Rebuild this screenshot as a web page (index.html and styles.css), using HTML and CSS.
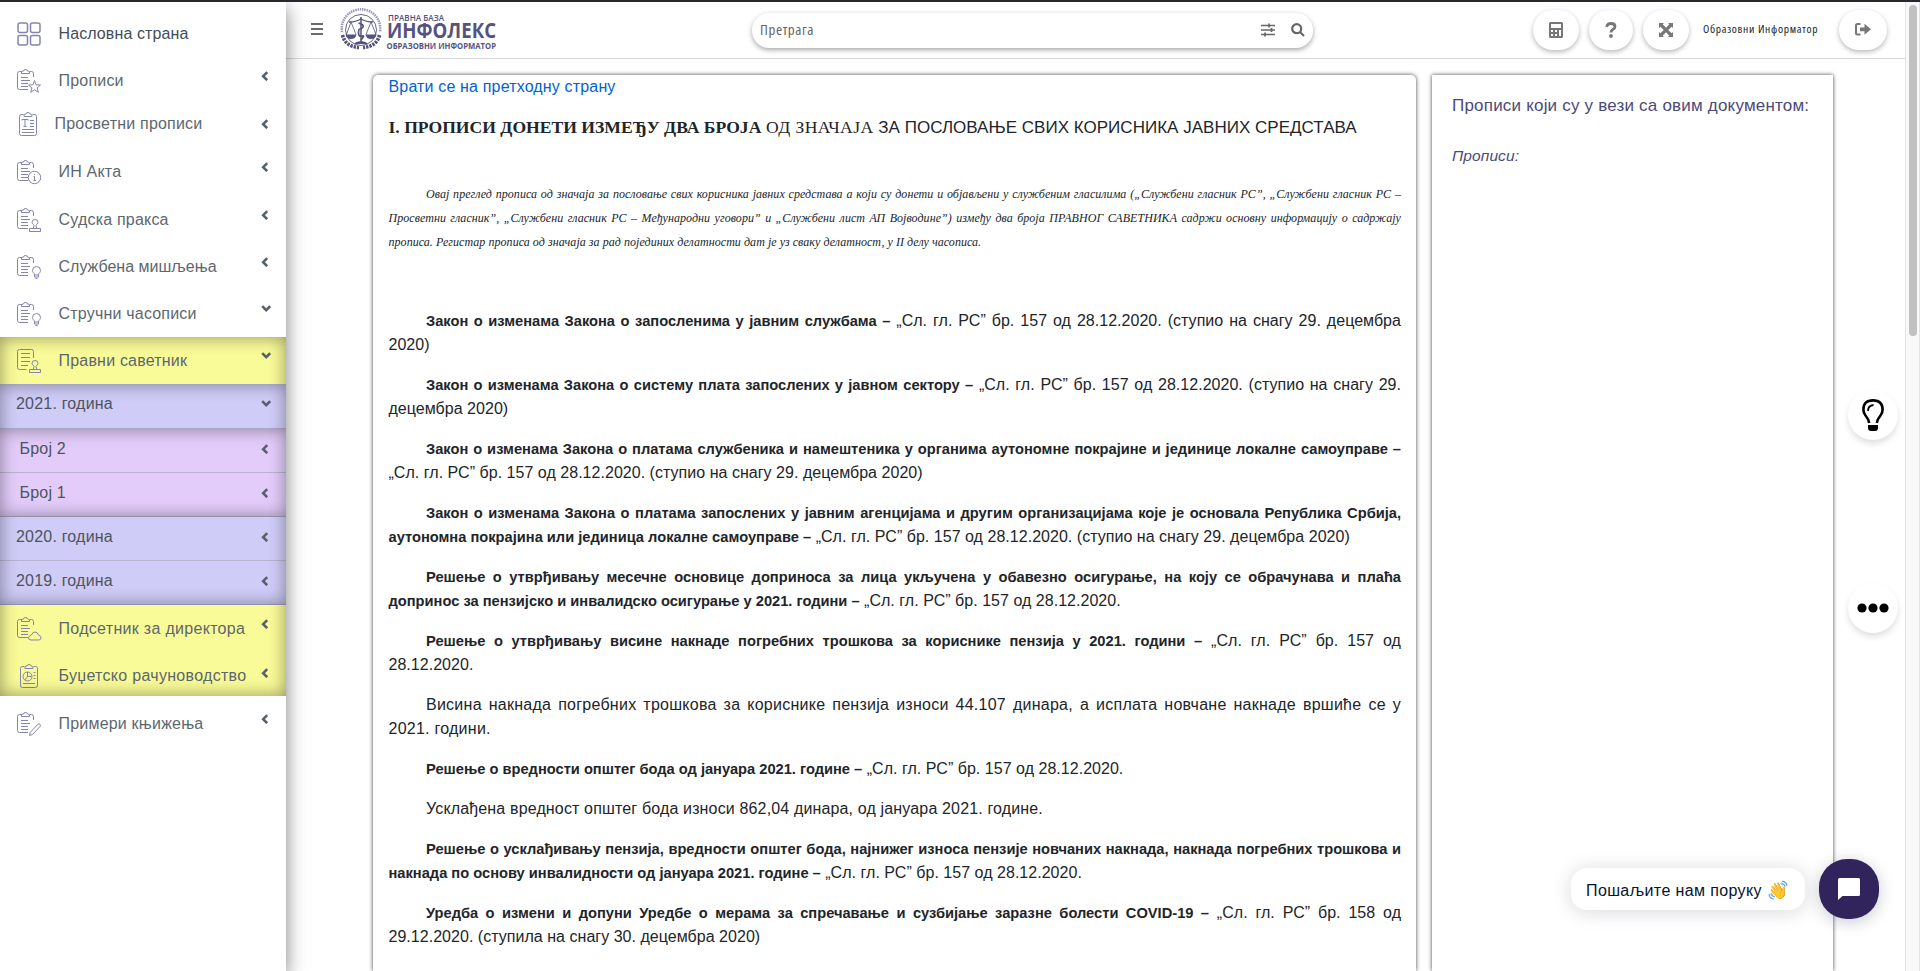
FILE: index.html
```html
<!DOCTYPE html>
<html>
<head>
<meta charset="utf-8">
<title>Инфолекс</title>
<link rel="stylesheet" href="styles.css">
</head>
<body>
<svg class="defs" width="0" height="0">
  <defs>
    <g id="lines"><path d="M4 8.5h7M4 11.5h9M4 14.5h7M4 17.5h7"/></g>
    <g id="board"><path d="M5 2.5H2.5Q.5 2.5.5 4.5v14q0 2 2 2H11M12.5 2.5h2q2 0 2 2V8"/><path d="M4.500 4.500h8V3Q12 2 10.500 2 10.500.5 8.500.5T6.500 2Q4.500 2 4.500 3z"/><use href="#lines"/></g>
    <g id="full"><path d="M6.500 2.500h-2q-2 0-2 2v17q0 2 2 2h13q2 0 2-2v-17q0-2-2-2h-2"/><path d="M7 4.500h8V3Q14.500 2 13 2 13 .5 11 .5T9 2Q7 2 7 3z"/></g>
    <g id="stamp"><path d="M12.500 23.500v-3h11v3zM16.500 20.500v-1.500l.8-1.500q-2.300-1.500-2.300-3.200 0-2.800 3-2.800t3 2.800q0 1.700-2.300 3.200l.8 1.500v1.500"/></g>
    <g id="bulb"><path d="M17.500 20q0-1.500-1.200-2.300-.8-1-.8-2.200 0-4 4-4t4 4q0 1.200-.8 2.200-1.200.8-1.200 2.300zM17.500 20v2h4v-2M18.500 23.500h2"/></g>
    <path id="left" d="M6.200 1.200 2.200 5.200l4 4"/>
    <path id="down" d="M1.200 2.200l4 4 4-4"/>
  </defs>
</svg>
<div class="app">
  <nav class="side">
    <a class="row home"><svg class="ico thick" viewBox="0 0 24 24"><rect x="1" y="1" width="9.500" height="9.500" rx="2"/><rect x="13.500" y="1" width="9.500" height="9.500" rx="2"/><rect x="1" y="13.500" width="9.500" height="9.500" rx="2"/><rect x="13.500" y="13.500" width="9.500" height="9.500" rx="2"/></svg><span>Насловна страна</span></a>
    <a class="row"><svg class="ico" viewBox="0 0 24 24"><use href="#board"/><path class="w" d="M17.500 11.500l1.600 4.300 4.400.2-3.400 2.800 1.200 4.500-3.800-2.500-3.800 2.500 1.200-4.500-3.400-2.800 4.400-.2z"/></svg><span>Прописи</span><svg class="arr" viewBox="0 0 10 10"><use href="#left"/></svg></a>
    <a class="row edu"><svg class="ico" viewBox="0 0 24 24"><use href="#full"/><path d="M5 8.500v-1h6v1M8 7.500v7M6.500 14.500h3M13 8.500h4M13 11.500h4M13 14.500h4M5 17.500h12M5 20.500h12"/></svg><span>Просветни прописи</span><svg class="arr" viewBox="0 0 10 10"><use href="#left"/></svg></a>
    <a class="row"><svg class="ico" viewBox="0 0 24 24"><use href="#board"/><circle class="w" cx="17.500" cy="17.500" r="6.200"/><path d="M17.500 14v1M16.500 16.500h1v4M16.500 20.500h2.500"/></svg><span>ИН Акта</span><svg class="arr" viewBox="0 0 10 10"><use href="#left"/></svg></a>
    <a class="row tall"><svg class="ico" viewBox="0 0 24 24"><use href="#board"/><use href="#stamp" class="w"/></svg><span>Судска пракса</span><svg class="arr" viewBox="0 0 10 10"><use href="#left"/></svg></a>
    <a class="row tight"><svg class="ico" viewBox="0 0 24 24"><use href="#board"/><use href="#bulb" class="w"/></svg><span>Службена мишљења</span><svg class="arr" viewBox="0 0 10 10"><use href="#left"/></svg></a>
    <a class="row"><svg class="ico" viewBox="0 0 24 24"><use href="#board"/><use href="#bulb" class="w"/></svg><span>Стручни часописи</span><svg class="arr" viewBox="0 0 10 10"><use href="#down"/></svg></a>
    <div class="group yellow">
      <a class="row"><svg class="ico" viewBox="0 0 24 24"><path d="M9.500 20.500h-7q-2 0-2-2v-16q0-2 2-2h12q2 0 2 2V9M4 4.500h9M4 8.500h9M4 12.500h9M4 16.500h7"/><use href="#stamp"/></svg><span>Правни саветник</span><svg class="arr" viewBox="0 0 10 10"><use href="#down"/></svg></a>
      <div class="group blue">
        <a class="sub year open"><span>2021. година</span><svg class="arr" viewBox="0 0 10 10"><use href="#down"/></svg></a>
        <div class="group pink">
          <a class="sub"><span>Број 2</span><svg class="arr" viewBox="0 0 10 10"><use href="#left"/></svg></a>
          <a class="sub"><span>Број 1</span><svg class="arr" viewBox="0 0 10 10"><use href="#left"/></svg></a>
        </div>
        <a class="sub year"><span>2020. година</span><svg class="arr" viewBox="0 0 10 10"><use href="#left"/></svg></a>
        <a class="sub year"><span>2019. година</span><svg class="arr" viewBox="0 0 10 10"><use href="#left"/></svg></a>
      </div>
      <a class="row wide"><svg class="ico" viewBox="0 0 24 24"><use href="#board"/><path class="y" d="M14 23q-2.500 0-2.500-2t3-3q1-3 3.500-3t3.500 3q2.500.8 2.500 3 0 2-2.500 2z"/></svg><span>Подсетник за директора</span><svg class="arr" viewBox="0 0 10 10"><use href="#left"/></svg></a>
      <a class="row last wide"><svg class="ico book" viewBox="0 0 24 24"><use href="#full"/><circle cx="9.500" cy="12.500" r="4.500"/><path d="M9.500 8v4.500l-2.500 3.500M9.500 12.500h4M15.500 8.500h2M15.500 11.500h2M15.500 14.500h2M5 19.500h12"/></svg><span>Буџетско рачуноводство</span><svg class="arr" viewBox="0 0 10 10"><use href="#left"/></svg></a>
    </div>
    <a class="row books"><svg class="ico" viewBox="0 0 24 24"><use href="#board"/><path class="w" d="M12.500 23.500l.8-3.200 7.500-8q1.200-1 2.200 0t0 2.200l-7.500 8z"/></svg><span>Примери књижења</span><svg class="arr" viewBox="0 0 10 10"><use href="#left"/></svg></a>
  </nav>
  <div class="main">
    <header class="top">
      <svg class="burger" viewBox="0 0 12 12"><path d="M0 1h12M0 6h12M0 11h12"/></svg>
      <svg class="logo" width="160" height="44" viewBox="0 0 160 44">
        <g fill="none" stroke="#55527f">
          <path d="M2 24A19.300 19.300 0 1 1 40 24" stroke-width="2.500" stroke-dasharray="1.500 .8" opacity=".6"/>
          <circle cx="21" cy="22" r="15.500" stroke-width=".9"/>
          <path d="M2.500 27Q5 38.500 19 39.500M39.500 27Q37 38.500 23 39.500" stroke-width="3.600" stroke-dasharray="2.400 1"/>
          <path d="M9 14q7 0 12-3 5 3 12 3" stroke-width="1.400"/>
          <path d="M11 14 6.500 26.500M11 14l5 12.500M31 14l-5 12.500M31 14l5 12.500" stroke-width=".8"/>
          <path d="M21 9v25" stroke-width="1.500"/>
          <path d="M18.500 15q6 2 4.500 4t-3 2-1.500 4 3.500 3-1 4" stroke-width="1.700"/>
        </g>
        <g fill="#55527f"><path d="M5.500 26.500h11q-1 4.500-5.500 4.500t-5.500-4.500zM25.500 26.500h11q-1 4.500-5.500 4.500t-5.500-4.500zM14 36q1.500-2.500 7-3 5.500.5 7 3z"/>
          <g font-family="Open Sans, sans-serif" font-weight="700">
          <text x="48" y="12.500" font-size="9.500" font-weight="600" textLength="56" lengthAdjust="spacingAndGlyphs">ПРАВНА БАЗА</text>
          <text x="47" y="30.200" font-size="21" textLength="109" lengthAdjust="spacingAndGlyphs">ИНФОЛЕКС</text>
          <text x="46.500" y="40.700" font-size="9.500" textLength="109.500" lengthAdjust="spacingAndGlyphs">ОБРАЗОВНИ ИНФОРМАТОР</text></g>
        </g>
      </svg>
      <div class="search"><span>Претрага</span>
        <svg class="sliders" viewBox="0 0 14 14"><path d="M0 2.500h14M0 7h14M0 11.500h14M8 .5v4M10.500 5v4M4 9.500v4"/></svg>
        <svg class="glass" viewBox="0 0 14 14"><circle cx="5.700" cy="5.700" r="4.500"/><path d="M9 9l4 4"/></svg>
      </div>
      <div class="btn calc"><svg width="14" height="16" viewBox="0 0 14 16"><path fill-rule="evenodd" d="M1.500 0h11Q14 0 14 1.500v13q0 1.500-1.500 1.500h-11Q0 16 0 14.500v-13Q0 0 1.500 0zM2 2v4h10V2zM2 8v2h2V8zM6 8v2h2V8zM10 8v6h2V8zM2 12v2h2v-2zM6 12v2h2v-2z"/></svg></div>
      <div class="btn help"><svg width="12" height="16" viewBox="0 0 12 16"><path d="M1.500 4.800Q2.500 1.500 6 1.500q4 0 4 3 0 1.800-2.200 3Q6 8.500 6 10.500" fill="none" stroke="#777" stroke-width="2.800"/><circle cx="6" cy="14" r="1.900"/></svg></div>
      <div class="btn expand"><svg width="14" height="14" viewBox="0 0 14 14"><path d="M0 0h5L3.700 1.300 7 4.800l3.300-3.500L9 0h5v5l-1.300-1.300L9.200 7l3.500 3.300L14 9v5H9l1.300-1.300L7 9.200l-3.300 3.500L5 14H0V9l1.300 1.300L4.800 7 1.300 3.700 0 5z"/></svg></div>
      <span class="user">Образовни Информатор</span>
      <div class="btn exit"><svg width="16" height="13" viewBox="0 0 16 13"><path d="M5.500 1H2.500Q1 1 1 2.500v7.500Q1 11.500 2.500 11.500h3" fill="none" stroke="#777" stroke-width="2"/><path d="M5 4.500h4.500V.8L16 6.300l-6.500 5.500V8.300H5z"/></svg></div>
    </header>
    <div class="content">
      <article class="doc">
        <a class="back">Врати се на претходну страну</a>
        <h1><b>I. ПРОПИСИ ДОНЕТИ ИЗМЕЂУ ДВА БРОЈА</b> <i>ОД ЗНАЧАЈА</i> <span>ЗА ПОСЛОВАЊЕ СВИХ КОРИСНИКА ЈАВНИХ СРЕДСТАВА</span></h1>
        <p class="intro">Овај преглед прописа од значаја за пословање свих корисника јавних средстава а који су донети и објављени у службеним гласилима („Службени гласник РС”, „Службени гласник РС – Просветни гласник”, „Службени гласник РС – Међународни уговори” и „Службени лист АП Војводине”) између два броја ПРАВНОГ САВЕТНИКА садржи основну информацију о садржају прописа. Регистар прописа од значаја за рад појединих делатности дат је уз сваку делатност, у II делу часописа.</p>
        <p><b>Закон о изменама Закона о запосленима у јавним службама –</b> „Сл. гл. РС” бр. 157 од 28.12.2020. (ступио на снагу 29. децембра 2020)</p>
        <p><b>Закон о изменама Закона о систему плата запослених у јавном сектору –</b> „Сл. гл. РС” бр. 157 од 28.12.2020. (ступио на снагу 29. децембра 2020)</p>
        <p><b>Закон о изменама Закона о платама службеника и намештеника у органима аутономне покрајине и јединице локалне самоуправе –</b> „Сл. гл. РС” бр. 157 од 28.12.2020. (ступио на снагу 29. децембра 2020)</p>
        <p><b>Закон о изменама Закона о платама запослених у јавним агенцијама и другим организацијама које је основала Република Србија, аутономна покрајина или јединица локалне самоуправе –</b> „Сл. гл. РС” бр. 157 од 28.12.2020. (ступио на снагу 29. децембра 2020)</p>
        <p><b>Решење о утврђивању месечне основице доприноса за лица укључена у обавезно осигурање, на коју се обрачунава и плаћа допринос за пензијско и инвалидско осигурање у 2021. години –</b> „Сл. гл. РС” бр. 157 од 28.12.2020.</p>
        <p><b>Решење о утврђивању висине накнаде погребних трошкова за кориснике пензија у 2021. години –</b> „Сл. гл. РС” бр. 157 од 28.12.2020.</p>
        <p class="plain loose">Висина накнада погребних трошкова за кориснике пензија износи 44.107 динара, а исплата новчане накнаде вршиће се у 2021. години.</p>
        <p><b>Решење о вредности општег бода од јануара 2021. године –</b> „Сл. гл. РС” бр. 157 од 28.12.2020.</p>
        <p class="plain">Усклађена вредност општег бода износи 862,04 динара, од јануара 2021. године.</p>
        <p><b>Решење о усклађивању пензија, вредности општег бода, најнижег износа пензије новчаних накнада, накнада погребних трошкова и накнада по основу инвалидности од јануара 2021. године –</b> „Сл. гл. РС” бр. 157 од 28.12.2020.</p>
        <p><b>Уредба о измени и допуни Уредбе о мерама за спречавање и сузбијање заразне болести COVID-19 –</b> „Сл. гл. РС” бр. 158 од 29.12.2020. (ступила на снагу 30. децембра 2020)</p>
      </article>
      <aside class="rel"><h2>Прописи који су у вези са овим документом:</h2><h3>Прописи:</h3></aside>
    </div>
  </div>
  <div class="scroll"><div class="thumb"></div></div>
</div>
<div class="fab tip"><svg width="22" height="32" viewBox="0 0 22 32"><path d="M7.200 24Q6.500 20 3.500 16.500 1.400 14 1.400 10.500 1.400 1.400 11 1.400T20.600 10.500q0 3.500-2.100 6-3 3.500-3.700 7.500" fill="none" stroke="#000" stroke-width="2.600"/><path d="M6 12q0-5.500 5.500-6" fill="none" stroke="#000" stroke-width="1.800"/><path d="M6 26h10v2.500q0 3.500-3 3.500H9q-3 0-3-3.500z"/></svg></div>
<div class="fab more"><svg width="32" height="10" viewBox="0 0 32 10"><circle cx="5" cy="5" r="4.600"/><circle cx="16" cy="5" r="4.600"/><circle cx="27" cy="5" r="4.600"/></svg></div>
<div class="bubble"><span>Пошаљите нам поруку</span><span class="wave">👋<svg viewBox="0 0 20 20"><path d="M14 1.200q4.500.3 5 5M13.500 3.500q3 .2 3.500 3M1 14q.2 4.500 5 5M3.500 13.500q.2 3 3.500 3.500"/></svg></span></div>
<div class="chat"><svg width="22" height="22" viewBox="0 0 22 22"><path d="M1.500 0h19Q22 0 22 1.500v15q0 1.500-1.500 1.500H4.500L0 22V1.500Q0 0 1.500 0z"/></svg></div>
</body>
</html>
```
FILE: styles.css
```css
* { box-sizing: border-box; }
body { margin: 0; height: 971px; overflow: hidden; background: #fff; font: 16px/24px "Liberation Sans", Arial, sans-serif; color: #212529; border-top: 2px solid #2b272f; }
.defs { position: absolute; }
.app { display: flex; height: 969px; overflow: hidden; }

/* sidebar */
.side { width: 286px; flex: none; background: #fff; position: relative; z-index: 2; box-shadow: 0 6px 18px rgba(0,0,0,.5); color: #5d676f; letter-spacing: .2px; }
.row { display: flex; height: 47px; padding: 0 15px 0 17px; align-items: center; }
.row span { padding: 0 0 0 17.500px; flex: 1; white-space: nowrap; }
.row .arr { margin-bottom: 9px; }
.home { height: 55px; padding-top: 8px; color: #454d57; letter-spacing: .1px; }
.edu { height: 44px; padding-bottom: 4px; }
.edu span { padding-left: 13.500px; }
.edu .arr { margin: 0; }
.tall { height: 48px; padding-top: 1px; }
.tight { letter-spacing: 0; }
.wide { letter-spacing: .3px; }
.last { height: 44px; padding-top: 3px; }
.last .arr { margin-bottom: 6px; }
.books { height: 55px; }
.ico { width: 24px; height: 24px; flex: none; fill: none; stroke: #8585ac; stroke-width: 1; overflow: visible; }
.thick { stroke-width: 1.500; }
.w { fill: #fff; }
.y { fill: #f9fb98; }
.book { position: relative; left: 1px; }
.arr { width: 10px; height: 10px; flex: none; fill: none; stroke: #56616b; stroke-width: 2.600; }
.group { position: relative; }
.group::after { content: ""; position: absolute; inset: 0; pointer-events: none; box-shadow: inset 0 0 17px rgba(0,0,0,.42); }
.yellow { background: #f9fb98; }
.yellow::after { z-index: 0; }
.blue { background: #cfccf7; z-index: 1; }
.pink { background: #e3ccfa; z-index: 1; }
.sub { display: flex; height: 44px; padding: 0 15px 4px 19.500px; align-items: center; justify-content: space-between; border-bottom: 1px solid #b9b3cf; color: #4b5560; }
.year { padding-left: 16px; }
.open { height: 45px; padding-bottom: 5px; border-color: #a9a6cc; }

/* header */
.main { flex: 1; min-width: 0; display: flex; flex-direction: column; }
.top { height: 57px; flex: none; border-bottom: 1px solid #d9d9d9; display: flex; align-items: center; padding: 0 18px 2px 24px; }
.burger { width: 14px; height: 12px; flex: none; stroke: #6b6b6b; stroke-width: 2; fill: none; }
.logo { flex: none; margin: 2px 0 0 16px; overflow: visible; }
.search { width: 561px; height: 35px; flex: none; margin: 3px 220px 0 252px; border-radius: 17px; box-shadow: 0 2px 5px rgba(0,0,0,.35); display: flex; align-items: center; padding: 0 8px; color: #666; }
.search span { flex: 1; font: 15px/20px "Open Sans", sans-serif; font-stretch: 75%; letter-spacing: .6px; padding-bottom: 4px; }
.search svg { fill: none; stroke: #666; flex: none; margin-bottom: 2px; }
.sliders { width: 14px; height: 14px; stroke-width: 1.700; margin-right: 16px; }
.glass { width: 14px; height: 14px; stroke-width: 2.200; }
.btn { height: 40px; flex: none; border-radius: 20px; box-shadow: 0 2px 5px rgba(0,0,0,.28); display: flex; align-items: center; justify-content: center; margin-top: 2px; fill: #777; padding-bottom: 1px; }
.calc, .expand { width: 46px; }
.help { width: 44px; margin-left: 10px; margin-right: 10px; }
.user { width: 116px; margin: 0 20px 0 14px; white-space: nowrap; color: #212529; font: 500 11.500px/16px "Open Sans", sans-serif; font-stretch: 75%; letter-spacing: .7px; padding-bottom: 1px; }
.exit { width: 48px; }

/* document */
.content { flex: 1; min-height: 0; display: flex; gap: 16px; padding: 16px 0 0 87px; }
.doc { width: 1043px; border-radius: 5px 5px 0 0; padding: 0 15px 0 15.500px; box-shadow: 0 0 4px rgba(0,0,0,.75); }
.back { display: block; color: #0062d6; letter-spacing: .16px; }
h1 { margin: 16px 0 42px; font-weight: 400; font-size: 17px; line-height: 24px; white-space: nowrap; }
h1 b { font: bold 17.600px/24px "Liberation Serif", serif; }
h1 i { font: normal 17.600px/24px "Liberation Serif", serif; letter-spacing: .4px; }
h1 span { letter-spacing: .02px; }
.doc p { margin: 0 0 16px; text-indent: 37.500px; text-align: justify; letter-spacing: .03px; }
.doc p b { font-size: 14.670px; line-height: 20px; letter-spacing: 0; }
.doc .plain { letter-spacing: .15px; }
.doc .loose { letter-spacing: .25px; }
.doc .intro { font: italic 12px/24px "Liberation Serif", serif; letter-spacing: .05px; margin-bottom: 55px; }
.rel { width: 401px; padding: 19px 20px; box-shadow: 0 0 4px rgba(0,0,0,.75); color: #4b4a78; }
.rel h2 { font-size: 17px; font-weight: 400; line-height: 24px; margin: 0 0 26px; letter-spacing: .2px; white-space: nowrap; }
.rel h3 { font-size: 15.500px; font-weight: 400; font-style: italic; line-height: 24px; margin: 0; letter-spacing: .1px; }
.scroll { width: 15px; flex: none; background: #f9f9f9; border: solid #e4e4e4; border-width: 0 1px; padding: 3px 2px 0 3px; }
.thumb { width: 8px; height: 331px; border-radius: 4px; background: #c1c1c1; }

/* floating controls */
.fab { position: absolute; left: 1848px; width: 50px; height: 50px; border-radius: 50%; background: #fff; box-shadow: 0 4px 6px rgba(0,0,0,.12); display: flex; align-items: center; justify-content: center; z-index: 3; }
.tip { top: 390px; }
.more { top: 583px; }
.bubble { position: absolute; left: 1571px; top: 868px; width: 234px; height: 42px; border-radius: 16px; background: #fff; box-shadow: 0 2px 20px rgba(0,18,46,.16); display: flex; align-items: center; padding: 4px 15px 0; color: #06132b; letter-spacing: .38px; white-space: nowrap; }
.wave { position: relative; margin-left: 6px; letter-spacing: 0; }
.wave svg { position: absolute; left: 0; top: 1px; width: 20px; height: 20px; fill: none; stroke: #5da9e8; stroke-width: 1.200; }
.chat { position: absolute; left: 1819px; top: 859px; width: 60px; height: 60px; border-radius: 28px; background: #31235c; box-shadow: 0 3px 16px rgba(0,18,46,.22); display: flex; align-items: center; justify-content: center; fill: #fff; }
```
